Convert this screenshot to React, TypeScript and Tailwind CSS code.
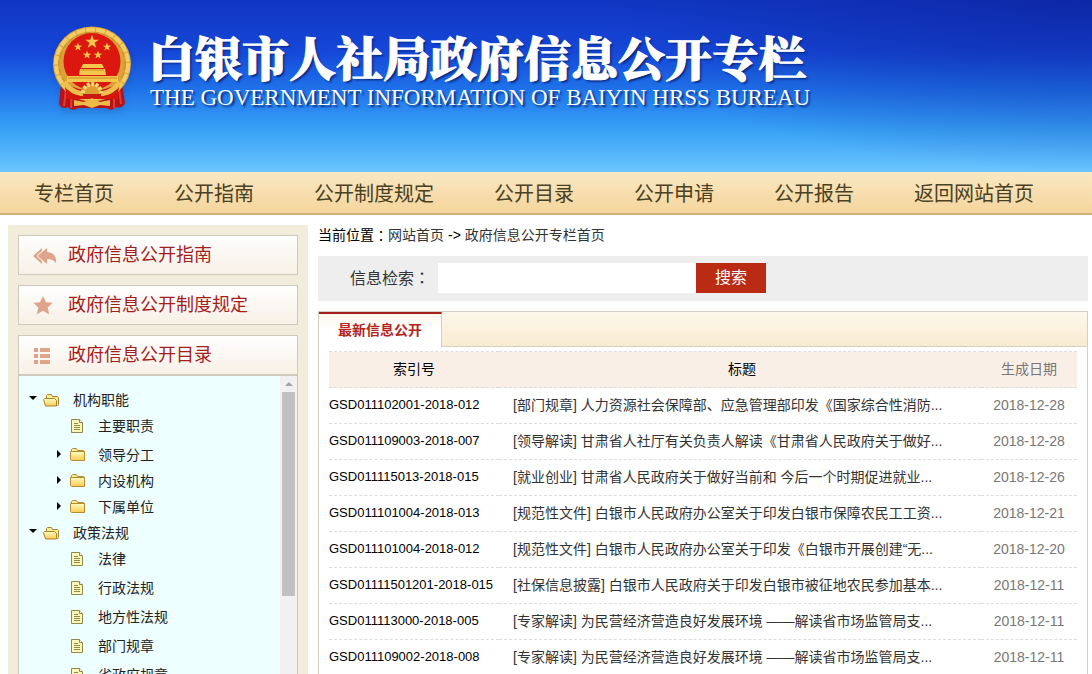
import type { ReactNode } from "react";

const NAV = ["专栏首页", "公开指南", "公开制度规定", "公开目录", "公开申请", "公开报告", "返回网站首页"];

interface TreeNode {
  label: string;
  kind: "open" | "closed" | "doc";
  root?: boolean;
}

const TREE: TreeNode[] = [
  { label: "机构职能", kind: "open", root: true },
  { label: "主要职责", kind: "doc" },
  { label: "领导分工", kind: "closed" },
  { label: "内设机构", kind: "closed" },
  { label: "下属单位", kind: "closed" },
  { label: "政策法规", kind: "open", root: true },
  { label: "法律", kind: "doc" },
  { label: "行政法规", kind: "doc" },
  { label: "地方性法规", kind: "doc" },
  { label: "部门规章", kind: "doc" },
  { label: "省政府规章", kind: "doc" },
];

const ROWS = [
  { id: "GSD011102001-2018-012", title: "[部门规章] 人力资源社会保障部、应急管理部印发《国家综合性消防...", date: "2018-12-28" },
  { id: "GSD011109003-2018-007", title: "[领导解读] 甘肃省人社厅有关负责人解读《甘肃省人民政府关于做好...", date: "2018-12-28" },
  { id: "GSD011115013-2018-015", title: "[就业创业] 甘肃省人民政府关于做好当前和 今后一个时期促进就业...", date: "2018-12-26" },
  { id: "GSD011101004-2018-013", title: "[规范性文件] 白银市人民政府办公室关于印发白银市保障农民工工资...", date: "2018-12-21" },
  { id: "GSD011101004-2018-012", title: "[规范性文件] 白银市人民政府办公室关于印发《白银市开展创建“无...", date: "2018-12-20" },
  { id: "GSD01111501201-2018-015", title: "[社保信息披露] 白银市人民政府关于印发白银市被征地农民参加基本...", date: "2018-12-11" },
  { id: "GSD011113000-2018-005", title: "[专家解读] 为民营经济营造良好发展环境 ——解读省市场监管局支...", date: "2018-12-11" },
  { id: "GSD011109002-2018-008", title: "[专家解读] 为民营经济营造良好发展环境 ——解读省市场监管局支...", date: "2018-12-11" },
];

const STAR = "0,-10 2.4,-3.2 9.5,-3.1 3.8,1.2 5.9,8.1 0,4 -5.9,8.1 -3.8,1.2 -9.5,-3.1 -2.4,-3.2";

function Emblem() {
  return (
    <svg width="80" height="86" viewBox="0 0 80 86" aria-hidden="true" className="shrink-0 drop-shadow-md">
      <path d="M9 58 L7 78 Q10 84 16 81 Q20 86 26 82 L54 82 Q60 86 64 81 Q70 83 73 77 L70 58 Z" fill="#b5131b" />
      <path d="M14 63 L12 80 M20 66 L19 82 M62 65 L62 82 M67 62 L69 78" stroke="#e63a2d" strokeWidth="2" />
      <ellipse cx="40" cy="38" rx="39" ry="37.5" fill="#dba238" />
      <ellipse cx="40" cy="38" rx="36" ry="34.5" fill="none" stroke="#f3cd63" strokeWidth="4" strokeDasharray="9 1" />
      <ellipse cx="40" cy="38" rx="33" ry="31.500" fill="none" stroke="#c98a26" strokeWidth="1" strokeDasharray="6 3" />
      <ellipse cx="40" cy="35.500" rx="28.500" ry="28.500" fill="#dc1710" />
      <g fill="#f3c64c">
        <polygon points={STAR} transform="translate(40 16) scale(.72)" />
        <polygon points={STAR} transform="translate(26 21) scale(.44)" />
        <polygon points={STAR} transform="translate(55 21) scale(.44)" />
        <polygon points={STAR} transform="translate(35 29) scale(.44)" />
        <polygon points={STAR} transform="translate(46 29) scale(.44)" />
        <path d="M31 38h19l2 4H29zM28 43h25l1 6H27zM15 50h51v6H15z" />
      </g>
      <path d="M29 44h23M16 52h49" stroke="#c98a26" />
      <path d="M12 57 Q40 72 68 57 L66 66 Q40 80 14 66 Z" fill="#c81a14" />
      <path d="M12 56 Q20 67 31 68 M68 56 Q60 67 49 68" stroke="#efbf4b" strokeWidth="5" fill="none" />
      <path d="M30 68a10 10 0 0 1 20 0z" fill="#dd9f31" />
      <path d="M31 67a9 9 0 0 1 18 0" fill="none" stroke="#f8d872" strokeWidth="4" strokeDasharray="3 1.4" />
      <path d="M14 66 Q40 76 66 66 L66 73 L14 73 Z" fill="#d3170f" />
      <path d="M22 74l10 2 8-4 8 4 10-2v6l-10-1-8 3-8-3-10 1z" fill="#edbb48" />
    </svg>
  );
}

function TreeIcon({ kind }: { kind: TreeNode["kind"] }) {
  if (kind === "doc") {
    return (
      <svg width="16" height="16" viewBox="0 0 16 16" aria-hidden="true">
        <path d="M1.500 1.500h8l3 3v10h-11z" fill="#fdf7ba" stroke="#8d8a4c" />
        <path d="M9.500 1.500v3h3" fill="#fff" stroke="#8d8a4c" />
        <path d="M4 5.500h4M4 7.500h6M4 9.500h6M4 11.500h6" stroke="#8d8a4c" />
      </svg>
    );
  }
  return (
    <svg width="16" height="16" viewBox="0 0 16 16" aria-hidden="true">
      <defs>
        <linearGradient id="folder" x1="0" y1="0" x2="0" y2="1">
          <stop offset="0" stopColor="#fffbc4" />
          <stop offset="1" stopColor="#f8cb52" />
        </linearGradient>
      </defs>
      {kind === "open" ? (
        <>
          <path d="M3.500 7V3.500l1-1h4l1 2h5l1 1v7l-1 1.500" fill="#fdeb9a" stroke="#a8842c" />
          <path d="M.5 7.500l1-1h10l2 2v5.500H2.500z" fill="url(#folder)" stroke="#a8842c" />
        </>
      ) : (
        <>
          <path d="M1.500 5V2.500l1-1h4l1 2h6l1 1v3" fill="#fdeb9a" stroke="#b48d32" />
          <path d="M.5 4.500h14v9H1.500l-1-1z" fill="url(#folder)" stroke="#b48d32" />
        </>
      )}
    </svg>
  );
}

function Arrow({ kind }: { kind: TreeNode["kind"] }) {
  return (
    <svg width="8" height="10" viewBox="0 0 8 10" aria-hidden="true">
      {kind === "open" && <path d="M0 1h8L4 5z" />}
      {kind === "closed" && <path d="M3 0l4 4-4 4z" />}
    </svg>
  );
}

function SideLink({ icon, children }: { icon: ReactNode; children: ReactNode }) {
  return (
    <a
      href="#"
      className="flex h-10 shrink-0 items-center border border-[#cdcabb] bg-linear-to-b from-white to-[#f7f0e6] pt-0.5 pl-3 text-[18px] text-[#a3201d]"
    >
      <span className="flex w-[37px] items-center pl-0.5">{icon}</span>
      {children}
    </a>
  );
}

function Colon() {
  return <span className="font-['Noto_Sans_CJK_TC',sans-serif]">：</span>;
}

export default function App() {
  return (
    <div className="flex h-screen flex-col overflow-hidden bg-white font-['Liberation_Sans','Noto_Sans_CJK_SC',sans-serif] text-sm text-[#333]">
      <header className="flex h-[172px] shrink-0 items-start bg-[radial-gradient(ellipse_45%_100%_at_100%_0,#0a1c9088,transparent),linear-gradient(#1136c2,#1547d8_30%,#1f72ea_52%,#38a2f6_76%,#6cc5fe)] pt-[26px] pl-[52px]">
        <Emblem />
        <div className="pl-4 whitespace-nowrap text-white text-shadow-[2px_2px_2px_#0a2a80]">
          <h1 className="font-['Noto_Serif_CJK_SC','Noto_Sans_CJK_SC',serif] text-[47px] leading-[60px] font-black [-webkit-text-stroke:1px_white]">
            白银市人社局政府信息公开专栏
          </h1>
          <p className="pl-0.5 font-['Liberation_Serif',serif] text-[23px] leading-6">
            THE GOVERNMENT INFORMATION OF BAIYIN HRSS BUREAU
          </p>
        </div>
      </header>

      <nav className="flex h-[43px] shrink-0 items-center border-b-2 border-[#d2b27c] bg-linear-to-b from-[#fae8c3] to-[#f5d59c] pt-0.5 pl-1 text-xl whitespace-nowrap text-[#4a4022]">
        {NAV.map(item => (
          <a key={item} href="#" className="px-[30px]">{item}</a>
        ))}
      </nav>

      <div className="flex min-h-0 grow gap-2.5 pr-1 pl-2">
        <aside className="mt-2.5 flex w-[300px] shrink-0 flex-col gap-2.5 bg-[#f2ecdd] px-2.5 pt-2.5">
          <SideLink
            icon={
              <svg width="24" height="16" viewBox="0 0 24 16" fill="#dfa48c" aria-hidden="true">
                <path d="M9 0v3L3.500 8 9 13v3L0 8z" />
                <path d="M14 0v4q10 1 9 11-3-4-9-4v5L4.500 8z" />
              </svg>
            }
          >
            政府信息公开指南
          </SideLink>
          <SideLink
            icon={
              <svg width="20" height="20" viewBox="-10 -10 20 20" fill="#dfa48c" aria-hidden="true">
                <polygon points="0,-10 3,-3.800 9.700,-3.200 4.700,1.400 6.200,8.400 0,4.800 -6.200,8.400 -4.700,1.400 -9.700,-3.200 -3,-3.800" />
              </svg>
            }
          >
            政府信息公开制度规定
          </SideLink>
          <div className="flex min-h-0 grow flex-col">
            <SideLink
              icon={
                <svg width="20" height="18" viewBox="-2 0 20 18" fill="#dfa48c" aria-hidden="true">
                  <path d="M-1 1h4v4h-4zM5 1h10v4H5zM-1 7h4v4h-4zM5 7h10v4H5zM-1 13h4v4h-4zM5 13h10v4H5z" />
                </svg>
              }
            >
              政府信息公开目录
            </SideLink>
            <div className="flex min-h-0 grow border-x border-t border-[#cdcabb] bg-[#eff]">
              <ul className="grow overflow-hidden pt-[11px] text-[#222]">
                {TREE.map(node => (
                  <li
                    key={node.label}
                    className={`flex h-[26px] items-center ${node.root ? "pl-2.5" : "pl-[35px]"} ${node.kind === "doc" ? "mb-[3px]" : ""}`}
                  >
                    <Arrow kind={node.kind} />
                    <span className={node.root ? "pr-3.5 pl-1.5" : "pr-3 pl-2"}>
                      <TreeIcon kind={node.kind} />
                    </span>
                    <a href="#">{node.label}</a>
                  </li>
                ))}
              </ul>
              <div className="flex w-[17px] shrink-0 flex-col items-center bg-[#f1f1f1]">
                <div className="flex h-4 items-center">
                  <svg width="8" height="4" viewBox="0 0 8 4" aria-hidden="true">
                    <path d="M0 4l4-4 4 4z" fill="#a3a3a3" />
                  </svg>
                </div>
                <div className="h-[204px] w-[13px] bg-[#c1c1c1]" />
              </div>
            </div>
          </div>
        </aside>

        <main className="min-w-0 grow">
          <p className="flex h-10 items-center text-black">
            当前位置<Colon />
            <a href="#" className="text-[#333]">网站首页</a>
            <span className="px-1">-&gt;</span>
            <a href="#" className="text-[#333]">政府信息公开专栏首页</a>
          </p>

          <form className="mt-px flex h-[45px] items-center bg-[#eee] pb-px pl-8 text-base">
            <label htmlFor="keyword" className="w-[88px]">信息检索<Colon /></label>
            <input id="keyword" type="text" className="h-[30px] w-[258px] bg-white px-2 outline-none" />
            <button type="button" className="h-[30px] w-[70px] bg-[#b92b13] text-white">搜索</button>
          </form>

          <section className="mt-2.5 border-x border-t border-[#d3cfc2]">
            <div className="flex h-[35px] border-b border-[#d3cfc2] bg-linear-to-b from-[#fdf8ec] to-[#f8ebd0]">
              <button
                type="button"
                className="-mb-px w-[123px] border-t-2 border-r border-t-[#a3201d] border-r-[#d3cfc2] bg-linear-to-b from-[#fdf8ec] to-white to-50% pb-0.5 font-bold text-[#b3241c]"
              >
                最新信息公开
              </button>
            </div>
            <div className="px-2.5 pt-1">
              <table className="w-full table-fixed border-collapse whitespace-nowrap">
                <thead>
                  <tr className="h-9 border-y border-dashed border-[#ddd] bg-[#faefe6] text-black">
                    <th className="w-[170px] pb-0.5 font-normal">索引号</th>
                    <th className="pb-0.5 pl-1 font-normal">标题</th>
                    <th className="w-[96px] pb-0.5 font-normal text-[#777]">生成日期</th>
                  </tr>
                </thead>
                <tbody>
                  {ROWS.map(row => (
                    <tr key={row.id} className="h-9 border-b border-dashed border-[#ddd]">
                      <td className="text-[13px] text-black">{row.id}</td>
                      <td className="pb-0.5 pl-3.5"><a href="#">{row.title}</a></td>
                      <td className="pb-0.5 text-center text-[#777]">{row.date}</td>
                    </tr>
                  ))}
                </tbody>
              </table>
            </div>
          </section>
        </main>
      </div>
    </div>
  );
}
